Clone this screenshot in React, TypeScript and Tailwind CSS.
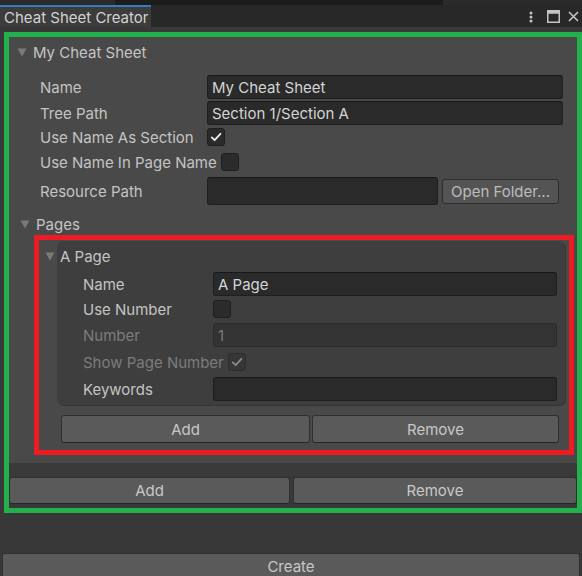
import React from 'react';

const Tri = ({ className = '' }: { className?: string }) => (
  <svg width="10" height="9" viewBox="0 0 10 9" className={`shrink-0 ${className}`}>
    <path d="M0.5 0.5H9.5L5 8.5Z" fill="#7a7a7a" />
  </svg>
);

const Check = ({ color }: { color: string }) => (
  <svg width="12" height="12" viewBox="0 0 12 12">
    <path d="M1.8 6.4L4.6 9.2L10.4 2.8" fill="none" stroke={color} strokeWidth="1.8" strokeLinecap="round" strokeLinejoin="round" />
  </svg>
);

function Field({ value = '', disabled = false, className = 'flex-1' }: { value?: string; disabled?: boolean; className?: string }) {
  return (
    <div
      className={`h-full flex items-center rounded-[3px] border px-[4px] whitespace-nowrap ${
        disabled
          ? 'bg-[#333333] border-[#2b2b2b] text-[#7a7a7a]'
          : 'bg-[#2a2a2a] border-[#1f1f1f] border-t-[#181818] text-[#d4d4d4]'
      } ${className}`}
    >
      {value}
    </div>
  );
}

function Box({ checked = false, disabled = false }: { checked?: boolean; disabled?: boolean }) {
  return (
    <div
      className={`w-[18px] h-[18px] shrink-0 rounded-[3px] border flex items-center justify-center ${
        disabled ? 'bg-[#363636] border-[#2e2e2e]' : 'bg-[#2b2b2b] border-[#1f1f1f]'
      }`}
    >
      {checked && <Check color={disabled ? '#8a8a8a' : '#eeeeee'} />}
    </div>
  );
}

function Row({
  label,
  width,
  height,
  mt,
  disabled = false,
  children,
}: {
  label: string;
  width: string;
  height: string;
  mt: string;
  disabled?: boolean;
  children: React.ReactNode;
}) {
  return (
    <div className={`flex items-center ${height} ${mt}`}>
      <div className={`${width} shrink-0 pr-[4px] whitespace-nowrap ${disabled ? 'text-[#7c7c7c]' : 'text-[#c4c4c4]'}`}>
        {label}
      </div>
      {children}
    </div>
  );
}

function Btn({ label, className }: { label: string; className: string }) {
  return (
    <div
      className={`flex items-center justify-center rounded-[3px] border border-[#303030] border-b-[#262626] bg-[#5a5a5a] text-[#c8c8c8] ${className}`}
    >
      {label}
    </div>
  );
}

export default function App() {
  return (
    <div className="w-[582px] h-[576px] overflow-hidden bg-[#383838] font-['Inter',sans-serif] text-[15px] leading-none">
      {/* window tab strip */}
      <div className="flex h-[5px]">
        <div className="w-[115px] bg-[#2b2b2b]" />
        <div className="w-[328px] bg-[#1c1c1c]" />
        <div className="flex-1 bg-[#2b2b2b]" />
      </div>
      <div className="flex h-[22px] bg-[#282828]">
        <div className="w-[151px] border-t-2 border-[#3a79bb] bg-[#3c3c3c] pl-[4px] pt-[3px] text-[#d2d2d2] whitespace-nowrap">
          Cheat Sheet Creator
        </div>
        <div className="flex-1 flex items-center justify-end pr-[3px] pt-[1px] text-[#c4c4c4]">
          <svg width="4" height="12" viewBox="0 0 4 12" className="mr-[14px]">
            <circle cx="2" cy="2" r="1.5" fill="#c4c4c4" />
            <circle cx="2" cy="6" r="1.5" fill="#c4c4c4" />
            <circle cx="2" cy="10" r="1.5" fill="#c4c4c4" />
          </svg>
          <svg width="13" height="13" viewBox="0 0 13 13" className="mr-[8px]">
            <rect x="0.75" y="0.75" width="11.5" height="11.5" fill="none" stroke="#c4c4c4" strokeWidth="1.5" />
            <rect x="0.75" y="0.75" width="11.5" height="3" fill="#c4c4c4" />
          </svg>
          <svg width="11" height="11" viewBox="0 0 11 11">
            <path d="M1 1L10 10M10 1L1 10" stroke="#c4c4c4" strokeWidth="1.6" />
          </svg>
        </div>
      </div>

      {/* highlighted cheat sheet block */}
      <div className="mt-[5px] ml-[4px] w-[578px] h-[481px] border-[5px] border-[#22b14c] flex flex-col">
        <div className="h-[426px] bg-[#494949] pt-[3px]">
          <div className="flex h-[24px] items-center pl-[8px] text-[#c4c4c4]">
            <Tri />
            <span className="ml-[6px]">My Cheat Sheet</span>
          </div>
          <div className="pl-[31px] pr-[14px]">
            <Row label="Name" width="min-w-[167px]" height="h-[24px]" mt="mt-[11px]">
              <Field value="My Cheat Sheet" />
            </Row>
            <Row label="Tree Path" width="min-w-[167px]" height="h-[24px]" mt="mt-[2px]">
              <Field value="Section 1/Section A" />
            </Row>
            <Row label="Use Name As Section" width="min-w-[167px]" height="h-[22px]" mt="mt-[1px]">
              <Box checked />
            </Row>
            <Row label="Use Name In Page Name" width="min-w-[167px]" height="h-[22px]" mt="mt-[3px]">
              <Box />
            </Row>
            <Row label="Resource Path" width="min-w-[167px]" height="h-[28px]" mt="mt-[4px]">
              <Field className="w-[231px]" />
              <div className="ml-[4px] w-[117px] h-[25px] flex items-center justify-center rounded-[3px] border border-[#2e2e2e] bg-[#545454] text-[#bcbcbc]">
                Open Folder...
              </div>
            </Row>
          </div>
          <div className="mt-[8px] flex h-[22px] items-center pl-[11px] text-[#c4c4c4]">
            <Tri />
            <span className="ml-[6px]">Pages</span>
          </div>

          {/* highlighted page element */}
          <div className="ml-[25px] w-[540px] h-[220px] border-[5px] border-[#ed1c24] pt-[1px]">
            <div className="ml-[18px] mr-[4px] h-[164px] rounded-[6px] bg-[#3e3e3e] pt-[3px] shadow-[1px_1px_0_#363636]">
              <div className="flex h-[24px] items-center text-[#c4c4c4]">
                <Tri className="-ml-[12px]" />
                <span className="ml-[5px]">A Page</span>
              </div>
              <div className="pl-[26px] pr-[8px]">
                <Row label="Name" width="min-w-[130px]" height="h-[24px]" mt="mt-[4px]">
                  <Field value="A Page" />
                </Row>
                <Row label="Use Number" width="min-w-[130px]" height="h-[20px]" mt="mt-[3px]">
                  <Box />
                </Row>
                <Row label="Number" width="min-w-[130px]" height="h-[24px]" mt="mt-[4px]" disabled>
                  <Field value="1" disabled />
                </Row>
                <Row label="Show Page Number" width="min-w-[130px]" height="h-[22px]" mt="mt-[4px]" disabled>
                  <Box checked disabled />
                </Row>
                <Row label="Keywords" width="min-w-[130px]" height="h-[24px]" mt="mt-[4px]">
                  <Field />
                </Row>
              </div>
            </div>
            <div className="mt-[10px] ml-[22px] flex h-[28px] gap-[2px]">
              <Btn label="Add" className="w-[249px]" />
              <Btn label="Remove" className="w-[247px]" />
            </div>
          </div>
        </div>
        <div className="h-[14px] bg-[#3a3a3a]" />
        <div className="flex h-[27px] gap-[3px] bg-[#383838]">
          <Btn label="Add" className="w-[281px]" />
          <Btn label="Remove" className="flex-1" />
        </div>
        <div className="flex-1 bg-[#383838]" />
      </div>

      <div className="mt-[40px] ml-[2px] w-[578px] h-[28px] flex items-start justify-center pt-[5px] rounded-[3px] border border-[#303030] bg-[#5a5a5a] text-[#c8c8c8]">
        Create
      </div>
    </div>
  );
}
